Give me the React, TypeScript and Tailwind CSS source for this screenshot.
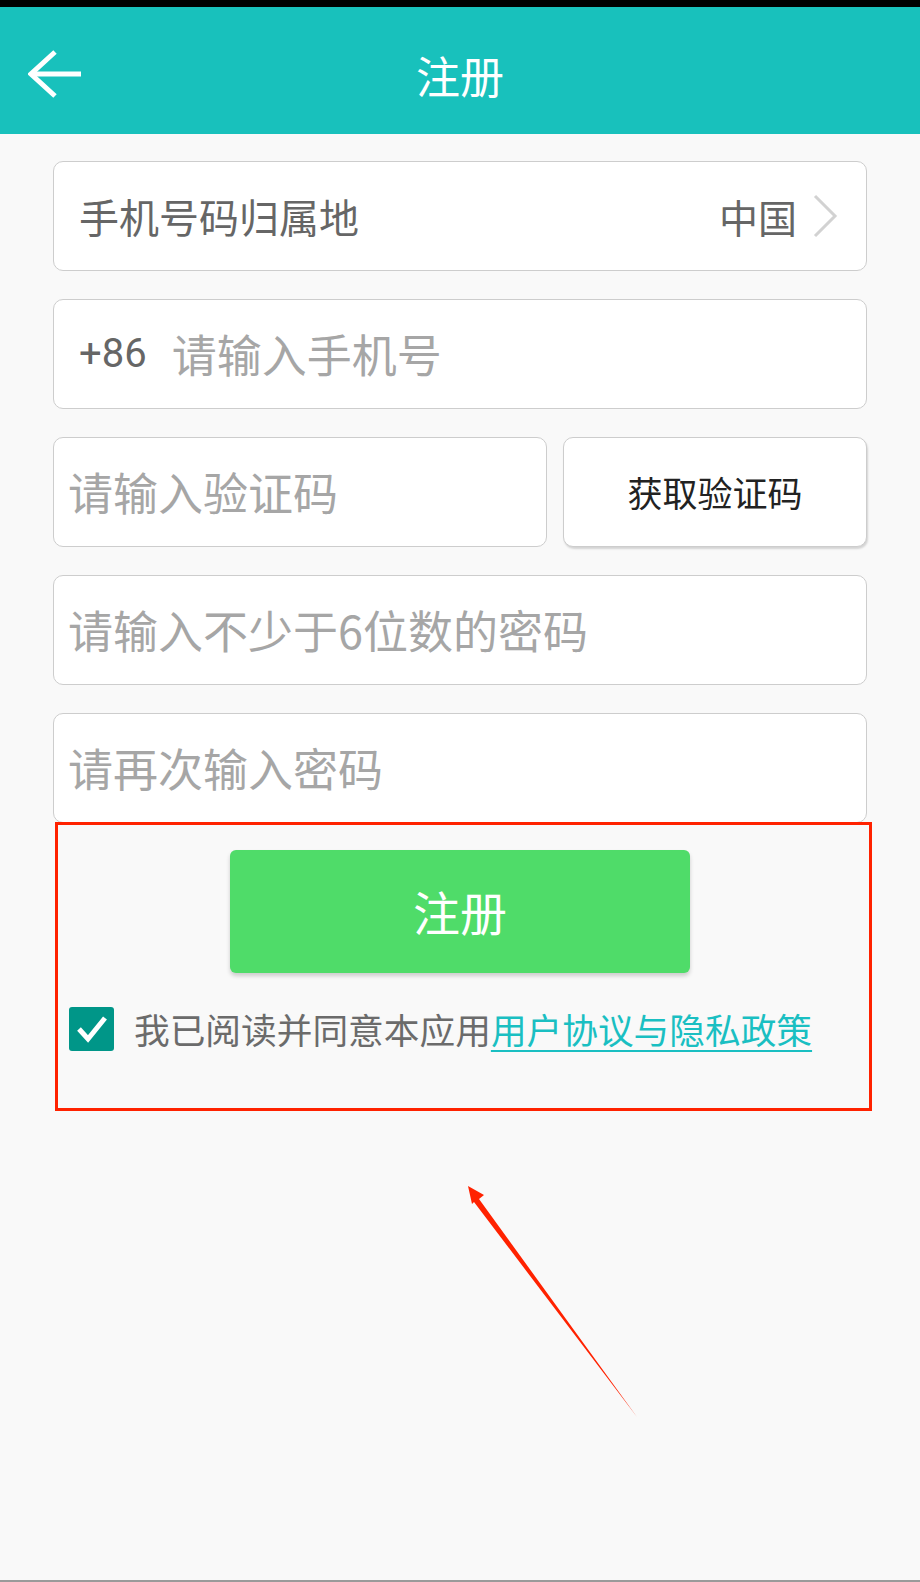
import React from "react";

const cjk = { fontFamily: '"Noto Sans CJK SC", "Noto Sans", sans-serif' };

function Field({ children, className = "" }: { children: React.ReactNode; className?: string }) {
  return (
    <div
      className={`h-[110px] bg-white border border-[#cdcdcd] rounded-[10px] flex items-center ${className}`}
    >
      {children}
    </div>
  );
}

export default function App() {
  return (
    <div className="relative w-[920px] h-[1582px] bg-[#f9f9f9] flex flex-col overflow-hidden" style={cjk}>
      {/* status strip */}
      <div className="h-[7px] bg-black" />

      {/* title bar */}
      <header className="h-[127px] bg-[#18c1bc] flex items-center">
        <div className="w-[110px] pl-[28px] pt-[6px]">
          <svg width="54" height="48" viewBox="0 0 54 48" fill="none">
            <path d="M27 2 L3 24 L27 46" stroke="white" strokeWidth="5" strokeLinejoin="miter" />
            <path d="M4 24 H53" stroke="white" strokeWidth="5" />
          </svg>
        </div>
        <h1 className="flex-1 text-center text-white text-[44px] leading-none pt-[8px]">注册</h1>
        <div className="w-[110px]" />
      </header>

      {/* form */}
      <div className="px-[53px] pt-[27px] flex flex-col gap-[28px]">
        <Field className="pl-[25px] pr-[27px]">
          <span className="flex-1 text-[40px] text-[#666]">手机号码归属地</span>
          <span className="text-[39px] text-[#666]">中国</span>
          <svg width="28" height="44" viewBox="0 0 28 44" className="ml-[14px]" fill="none">
            <path d="M4 2 L24 22 L4 42" stroke="#d2d2d2" strokeWidth="3" />
          </svg>
        </Field>

        <Field className="pl-[25px]">
          <span className="text-[40px] text-[#666]" style={{ fontFamily: 'Roboto, "Noto Sans", sans-serif' }}>
            +86
          </span>
          <span className="ml-[25px] text-[45px] text-[#a6a6a6]">请输入手机号</span>
        </Field>

        <div className="flex gap-[16px]">
          <Field className="flex-1 pl-[14px]">
            <span className="text-[45px] text-[#a6a6a6]">请输入验证码</span>
          </Field>
          <Field className="w-[304px] justify-center shadow-[1px_2px_2px_rgba(0,0,0,0.15)]">
            <span className="text-[35px] text-[#222]">获取验证码</span>
          </Field>
        </div>

        <Field className="pl-[14px]">
          <span className="text-[45px] text-[#a6a6a6]">请输入不少于6位数的密码</span>
        </Field>

        <Field className="pl-[14px]">
          <span className="text-[45px] text-[#a6a6a6]">请再次输入密码</span>
        </Field>
      </div>

      {/* highlighted area */}
      <section className="relative -mt-[1px] ml-[55px] w-[817px] h-[289px] border-[3px] border-[#ff2200]">
        <button className="mt-[25px] ml-[172px] w-[460px] h-[123px] rounded-[6px] bg-[#4fdc69] text-white text-[47px] shadow-[0_3px_4px_rgba(0,0,0,0.18)]">
          注册
        </button>
        <div className="mt-[34px] ml-[11px] flex items-center">
          <div className="w-[45px] h-[44px] rounded-[3px] bg-[#009688] flex items-center justify-center">
            <svg width="34" height="30" viewBox="0 0 34 30" fill="none">
              <path d="M4 15 L13 25 L30 4" stroke="white" strokeWidth="5" />
            </svg>
          </div>
          <p className="ml-[20px] text-[35.7px] text-[#6b6b6b] leading-none">
            我已阅读并同意本应用
            <span className="text-[#1abfc2] underline underline-offset-[6px] decoration-[2px]">用户协议与隐私政策</span>
          </p>
        </div>
      </section>

      <div className="flex-1" />
      <div className="h-[2px] bg-[#9a9a9a]" />

      {/* annotation arrow */}
      <svg className="absolute left-0 top-0 pointer-events-none" width="920" height="1582" viewBox="0 0 920 1582">
        <polygon points="468,1186 484,1195 479,1199 637,1417 474,1202 472,1204" fill="#ff2200" />
      </svg>
    </div>
  );
}
